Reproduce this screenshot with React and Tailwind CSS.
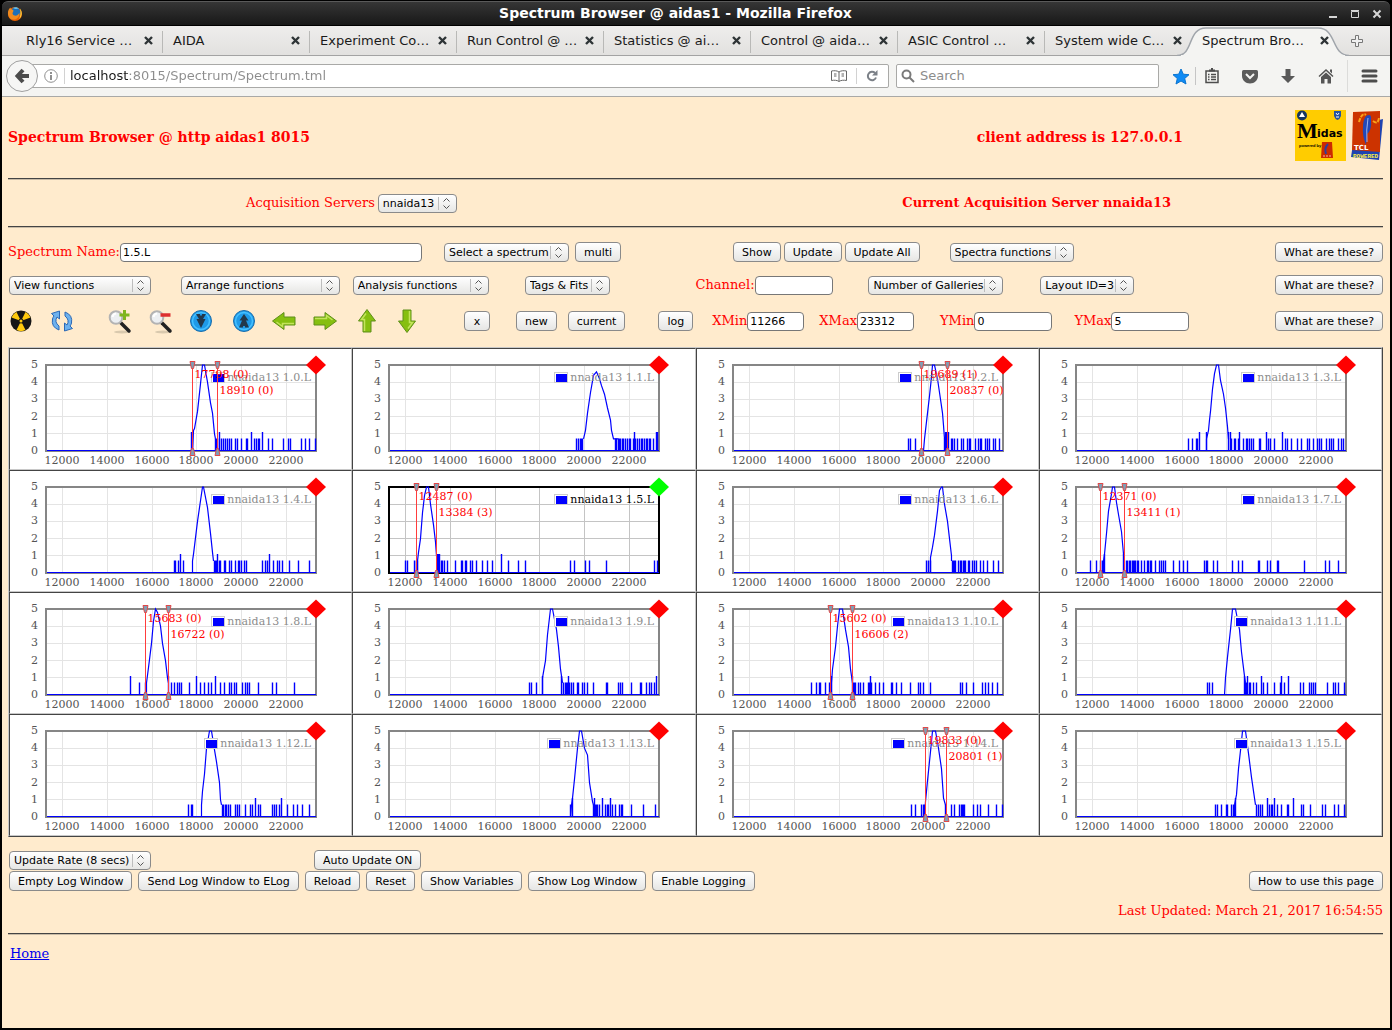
import { useState } from 'react';

const X_MIN = 11266;
const X_MAX = 23312;
const PLOT = { x: 36, y: 16, w: 270, h: 86 };
const X_TICKS = [12000, 14000, 16000, 18000, 20000, 22000];
const Y_TICKS = [0, 1, 2, 3, 4, 5];

// peak: [x, counts] in plot pixels, low / high: single channel hits
const SPECTRA = [
    {
        name: '1.0.L', tags: [[17798, 0], [18910, 0]],
        peak: [[146, 0], [147, 1.2], [148, 1.3], [151, 2.3], [154, 3.9], [156, 5], [158, 5], [161, 4], [164, 2.8], [166, 2.2], [168, 1], [169, 0.7]],
        low: [169, 170, 171, 173, 175, 177, 179, 181, 183, 185, 189, 191, 195, 200, 201, 208, 210, 212, 213, 222, 226, 237, 242, 244, 255, 259, 263, 269],
        high: [145, 146, 173, 205, 216],
    },
    {
        name: '1.1.L', tags: [],
        peak: [[194, 0.7], [196, 1.2], [198, 2.2], [201, 3.4], [204, 4.4], [207, 4.6], [210, 4.2], [212, 3.8], [215, 3.3], [218, 2.5], [221, 1.8], [222, 1.2], [224, 0.7], [229, 0.7]],
        low: [187, 189, 191, 192, 193, 226, 227, 229, 230, 231, 233, 234, 236, 238, 240, 241, 244, 246, 248, 250, 252, 253, 255, 257, 258, 260, 261, 264],
        high: [245, 267, 268],
    },
    {
        name: '1.2.L', tags: [[19689, 1], [20837, 0]],
        peak: [[190, 0], [191, 0.7], [192, 1.2], [194, 2.2], [196, 3.2], [198, 4.3], [199, 5], [201, 5], [204, 4.2], [206, 3.4], [209, 2.2], [210, 1.5], [211, 0.7]],
        low: [175, 177, 182, 211, 218, 219, 221, 224, 228, 230, 234, 236, 237, 242, 245, 247, 248, 252, 254, 256, 260, 262, 266],
        high: [212, 213, 215],
    },
    {
        name: '1.3.L', tags: [],
        peak: [[130, 0], [130, 0.7], [132, 1.2], [133, 1.8], [134, 2.3], [136, 3.6], [138, 4.5], [140, 5], [142, 5], [144, 4.1], [147, 3.3], [149, 2.5], [151, 1.4], [152, 0.7]],
        low: [112, 116, 120, 121, 155, 158, 159, 162, 167, 170, 171, 173, 175, 177, 183, 184, 192, 194, 198, 209, 211, 215, 221, 225, 231, 233, 237, 241, 243, 245, 250, 253, 255, 257, 262, 265, 267],
        high: [123, 130, 152, 154, 163, 190, 206],
    },
    {
        name: '1.4.L', tags: [],
        peak: [[146, 0], [146, 0.7], [147, 1.1], [151, 3], [156, 5], [157, 5], [161, 3.8], [164, 2.3], [166, 1.2], [167, 0.7]],
        low: [128, 129, 132, 137, 168, 169, 170, 171, 173, 174, 178, 179, 183, 185, 189, 192, 193, 195, 198, 200, 216, 219, 221, 227, 231, 233, 236, 243, 252, 263],
        high: [134, 171, 223],
    },
    {
        name: '1.5.L', tags: [[12487, 0], [13384, 3]], selected: true,
        peak: [[28, 0], [28, 0.7], [29, 1.2], [31, 2], [33, 3.5], [35, 4.5], [37, 5], [39, 5], [41, 4], [44, 2.8], [46, 1.8], [47, 1], [48, 0.7]],
        low: [16, 18, 25, 27, 28, 52, 53, 55, 58, 66, 72, 73, 76, 77, 81, 83, 87, 93, 98, 103, 119, 129, 136, 181, 185, 196, 200, 217, 265, 268],
        high: [48, 49, 50, 112],
    },
    {
        name: '1.6.L', tags: [],
        peak: [[197, 0], [197, 0.9], [199, 1.5], [201, 2.2], [204, 3.6], [206, 4.8], [208, 5], [209, 5], [211, 4], [214, 3], [216, 2], [218, 1], [218, 0.7]],
        low: [193, 195, 197, 219, 220, 221, 222, 225, 227, 228, 230, 231, 232, 235, 236, 239, 241, 243, 247, 250, 254, 260, 265],
        high: [],
    },
    {
        name: '1.7.L', tags: [[12371, 0], [13411, 1]],
        peak: [[27, 0], [27, 0.7], [28, 1.1], [30, 2.3], [32, 3.6], [35, 4.6], [36, 5], [38, 5], [40, 4.1], [42, 3.4], [45, 2.4], [47, 1.1], [48, 0.7]],
        low: [14, 20, 24, 26, 27, 50, 51, 53, 54, 56, 57, 58, 59, 61, 62, 65, 68, 71, 72, 74, 75, 79, 83, 85, 87, 89, 97, 103, 107, 111, 128, 130, 131, 137, 141, 156, 162, 166, 182, 183, 191, 194, 201, 202, 228, 249, 253, 262],
        high: [28, 47],
    },
    {
        name: '1.8.L', tags: [[15683, 0], [16722, 0]],
        peak: [[100, 0], [100, 0.7], [102, 1.6], [105, 3], [107, 4.3], [109, 5], [111, 4.8], [114, 4], [116, 3], [119, 2], [121, 1], [122, 0.7]],
        low: [93, 99, 125, 128, 131, 133, 135, 143, 154, 158, 162, 165, 174, 178, 183, 185, 188, 190, 196, 199, 201, 203, 212, 226, 230, 248],
        high: [84, 122, 150, 169],
    },
    {
        name: '1.9.L', tags: [],
        peak: [[153, 0], [153, 1], [156, 2], [158, 3.5], [161, 5], [163, 5], [167, 3.8], [169, 2.8], [171, 1.5], [173, 0.7]],
        low: [140, 142, 147, 174, 176, 177, 178, 180, 182, 184, 188, 189, 193, 195, 198, 204, 217, 218, 229, 231, 233, 242, 251, 252, 257, 260, 262, 265],
        high: [153, 172, 179, 267],
    },
    {
        name: '1.10.L', tags: [[15602, 0], [16606, 2]],
        peak: [[98, 0], [98, 0.7], [99, 1.5], [102, 2.8], [104, 4], [106, 5], [109, 5], [112, 3.8], [115, 2.8], [117, 1.5], [119, 0.7]],
        low: [78, 83, 86, 87, 92, 96, 97, 120, 121, 122, 125, 127, 130, 135, 136, 138, 142, 146, 150, 158, 159, 163, 168, 177, 185, 187, 190, 197, 227, 229, 233, 240, 249, 252, 255, 259, 264],
        high: [98, 119, 137],
    },
    {
        name: '1.11.L', tags: [],
        peak: [[148, 0], [149, 1], [151, 2.2], [154, 3.8], [156, 5], [159, 5], [163, 3.8], [165, 2.5], [168, 1.1], [169, 0.7]],
        low: [131, 133, 136, 169, 170, 173, 174, 177, 180, 187, 191, 198, 204, 208, 224, 227, 233, 235, 237, 239, 251, 257, 259, 262, 268],
        high: [168, 171, 185, 205, 212],
    },
    {
        name: '1.12.L', tags: [],
        peak: [[155, 0], [155, 0.7], [156, 1.5], [158, 2.5], [160, 4], [163, 5], [165, 5], [168, 3.9], [170, 3.2], [173, 2], [174, 1], [175, 0.7]],
        low: [142, 145, 146, 176, 177, 179, 180, 182, 184, 189, 191, 193, 199, 204, 206, 212, 214, 226, 228, 230, 233, 241, 247, 251, 256, 263],
        high: [209, 235],
    },
    {
        name: '1.13.L', tags: [],
        peak: [[181, 0], [182, 0.7], [183, 1.1], [185, 2.2], [188, 4], [190, 5], [192, 5], [195, 4], [198, 3.6], [200, 2], [203, 0.9], [204, 0.7]],
        low: [181, 204, 206, 207, 208, 210, 216, 218, 219, 223, 226, 230, 232, 233, 242, 254, 266],
        high: [183, 205, 213, 221],
    },
    {
        name: '1.14.L', tags: [[19833, 0], [20801, 1]],
        peak: [[191, 0], [192, 0.9], [194, 2.1], [197, 3.8], [199, 5], [202, 5], [205, 4], [208, 2.8], [210, 1.1], [212, 0.7]],
        low: [178, 182, 188, 190, 191, 212, 218, 221, 226, 228, 229, 230, 231, 240, 244, 247, 255, 263, 269],
        high: [],
    },
    {
        name: '1.15.L', tags: [],
        peak: [[158, 0.7], [160, 1.3], [162, 2.8], [165, 4.4], [166, 5], [169, 5], [172, 3.7], [175, 2.3], [178, 1.1], [179, 0.7]],
        low: [139, 141, 145, 150, 151, 155, 157, 158, 180, 182, 184, 186, 193, 195, 196, 201, 205, 211, 212, 225, 227, 234, 246, 249, 258, 262, 268],
        high: [159, 191, 198, 217],
    },
];

const toX = (channel) => PLOT.x + Math.floor(((channel - X_MIN) / (X_MAX - X_MIN)) * PLOT.w);
const toY = (counts) => PLOT.y + PLOT.h - (counts * PLOT.h) / 5;

const SpectrumPlot = ({ spectrum }) => {
    const { name, peak, low, high, tags, selected } = spectrum;
    const bottom = PLOT.y + PLOT.h;
    const right = PLOT.x + PLOT.w;
    const legendX = PLOT.x + (name.length > 5 ? 158 : 165);
    const hits = (list, counts) => list.map((x) => `M${PLOT.x + x + 0.5} ${bottom}V${toY(counts)}`).join('');
    const line = peak.map(([x, c]) => `${PLOT.x + x + 0.5},${toY(c)}`).join(' ');

    return (
        <svg width="330" height="120" className="block font-['DejaVu_Serif',serif] text-[11px]" role="img" aria-label={`nnaida13 ${name}`}>
            <g stroke={selected ? '#c4c4c4' : '#e4e4e4'} shapeRendering="crispEdges">
                {X_TICKS.map((t) => <line key={t} x1={toX(t) + 0.5} x2={toX(t) + 0.5} y1={PLOT.y} y2={bottom} />)}
                {Y_TICKS.map((t) => <line key={t} x1={PLOT.x} x2={right} y1={toY(t)} y2={toY(t)} />)}
            </g>
            <rect x={PLOT.x} y={PLOT.y} width={PLOT.w} height={PLOT.h} fill="none" stroke={selected ? '#000' : '#868686'} strokeWidth="2" />
            <path d={hits(low, 0.72) + hits(high, 1.1)} stroke="#0000ff" strokeWidth="1.4" />
            <polyline points={line} fill="none" stroke="#0000ff" strokeWidth="1.2" />
            <line x1={PLOT.x + 1} x2={right} y1={bottom - 0.5} y2={bottom - 0.5} stroke="#0000ff" />

            <g fill="#545454">
                {X_TICKS.map((t) => <text key={t} x={toX(t)} y="115" textAnchor="middle">{t}</text>)}
                {Y_TICKS.map((t) => <text key={t} x="28" y={Math.round(toY(t)) + 3} textAnchor="end">{t}</text>)}
            </g>

            <rect x={legendX + 0.5} y="23.5" width="13" height="10" fill="#fff" stroke="#ccc" />
            <rect x={legendX + 2} y="25" width="11" height="8" fill="#0000ff" />
            <text x={PLOT.x + 265} y="32" textAnchor="end" fill={selected ? '#000' : '#8c8c8c'}>nnaida13 {name}</text>

            {tags.map(([channel, count], i) => {
                const x = toX(channel) + 0.5;
                return (
                    <g key={channel}>
                        <line x1={x} x2={x} y1={PLOT.y} y2={bottom} stroke="#ff3c3c" />
                        <path d={`M${x - 2.5} 12.5h5l-1.5 7h-2zM${x - 2.5} 106.5h5l-1.5-7h-2z`} fill="#7f9fb5" stroke="#e04848" />
                        <text x={x + 2} y={29 + i * 16} fill="#ff0000">{channel} ({count})</text>
                    </g>
                );
            })}
            <path d={`M${right} 6.5l10 9.5-10 9.5-10-9.5z`} fill={selected ? '#00ff00' : '#ff0000'} />
        </svg>
    );
};

const Button = ({ children, className = '' }) => (
    <button
        type="button"
        className={`h-5 shrink-0 whitespace-nowrap rounded-[4px] border border-[#8a8a8a] bg-linear-to-b from-white to-[#e6e6e4] px-2 font-['DejaVu_Sans',sans-serif] text-[11px] leading-none text-black ${className}`}
    >
        {children}
    </button>
);

const Select = ({ label, className = '', id }) => (
    <span className={`relative inline-block h-[19px] shrink-0 ${className}`}>
        <select
            id={id}
            aria-label={id ? undefined : label}
            className="block h-full w-full appearance-none rounded-[4px] border border-[#8a8a8a] bg-linear-to-b from-white to-[#e6e6e4] pl-[4px] font-['DejaVu_Sans',sans-serif] text-[11px] leading-none text-black"
        >
            <option>{label}</option>
        </select>
        <svg className="pointer-events-none absolute right-[3px] top-[3px]" width="16" height="13" fill="none">
            <path d="M0.5 0v13" stroke="#bdbdbd" />
            <path d="M5.500 4.500l3-3 3 3M5.500 8.500l3 3 3-3" stroke="#555" />
        </svg>
    </span>
);

const TextField = ({ label, value = '', className = '' }) => {
    const [text, setText] = useState(value);
    return (
        <label className="flex shrink-0 items-center whitespace-nowrap">
            {label}
            <input
                type="text"
                value={text}
                onChange={(e) => setText(e.target.value)}
                className={`h-[19px] rounded-[4px] border border-[#777] bg-white px-[2px] font-['DejaVu_Sans',sans-serif] text-[11px] text-black ${className}`}
            />
        </label>
    );
};

const Rule = () => <hr className="h-[2px] border-0 border-t border-b border-t-[#444] border-b-[#c9bba6]" />;

const TABS = ['Rly16 Service …', 'AIDA', 'Experiment Co…', 'Run Control @ …', 'Statistics @ ai…', 'Control @ aida…', 'ASIC Control …', 'System wide C…', 'Spectrum Bro…'];

const CloseMark = () => (
    <svg width="9" height="9" viewBox="0 0 9 9" stroke="#2e3436" strokeWidth="2.4" fill="none">
        <path d="M1 1l7 7M8 1L1 8" />
    </svg>
);

const TitleBar = () => (
    <header className="flex h-[25px] items-center rounded-t-md border-t border-b border-t-[#5a5a5a] border-b-black bg-linear-to-b from-[#363636] to-[#181818] pl-[5px] pr-2">
        <svg width="16" height="16" viewBox="0 0 16 16">
            <circle cx="8" cy="8" r="7" fill="#e66000" />
            <circle cx="8.5" cy="6.5" r="5" fill="#1c6fb8" />
            <path d="M6 2c2-1.4 5-.6 6 1-2-.6-3 .4-4 0z" fill="#5fc0ee" />
            <path d="M1 6C1.500 3 3 2 3.500 1.500c0 1 .5 1.500 1.500 2C6.500 4 7 4.500 6 6c-1 1-.5 3 1.500 3.500 2 .5 3.500-.5 5-2.500.5 3-2 6-5 6.500C3 14 .5 10 1 6z" fill="#f08a1d" />
            <path d="M13 2.500c2.500 3 2.500 8-1 10.500 1.500-2.500 2-6 1-10.500z" fill="#ffd23c" />
        </svg>
        <h1 className="flex-1 text-center text-[14px] font-bold text-white">Spectrum Browser @ aidas1 - Mozilla Firefox</h1>
        <div className="flex items-center gap-3">
            <button type="button" aria-label="Minimize"><svg width="10" height="10"><path d="M1 8h8" stroke="#d5d5d5" strokeWidth="2" /></svg></button>
            <button type="button" aria-label="Maximize"><svg width="10" height="10"><path d="M1.500 2.500h7v6h-7zM1 1.500h8" stroke="#d5d5d5" fill="none" /></svg></button>
            <button type="button" aria-label="Close"><svg width="10" height="10"><path d="M1.500 1.500l7 7M8.500 1.500l-7 7" stroke="#d5d5d5" strokeWidth="2" /></svg></button>
        </div>
    </header>
);

const TabStrip = () => (
    <nav className="flex h-[30px] border-b border-[#a3a3a3] bg-linear-to-b from-[#eeedec] to-[#e2e1df] pl-[14px]">
        {TABS.map((tab, i) => {
            const active = i === TABS.length - 1;
            return (
                <div key={tab} className="relative flex w-[147px] items-center justify-between pr-[10px] pl-[10px] text-[13px] text-[#1a1a1a]">
                    {active && (
                        <svg className="absolute -left-[15px] top-[1px]" width="177" height="29" fill="#f4f4f2">
                            <path d="M0 28.500C17 28.500 10 1 29 1h112c19 0 13 27.500 31 27.500" stroke="#a0a5ab" strokeWidth="1.500" />
                            <path d="M4 28h164v1H4z" />
                        </svg>
                    )}
                    <a href="#" className="relative whitespace-nowrap">{tab}</a>
                    <button type="button" aria-label={`Close ${tab}`} className="relative"><CloseMark /></button>
                    {i < TABS.length - 2 && <span className="absolute right-0 top-[5px] h-[22px] w-px bg-[#b9b9b7]" />}
                </div>
            );
        })}
        <button type="button" aria-label="New tab" className="ml-[11px]">
            <svg width="14" height="14" fill="#f0f0f0" stroke="#777"><path d="M5.500 1.500h3v4h4v3h-4v4h-3v-4h-4v-3h4z" /></svg>
        </button>
    </nav>
);

const NavBar = () => (
    <div className="flex h-[41px] items-center border-b border-[#a9a9a7] bg-[#f4f4f2] pl-1 pr-3 text-[13px]">
        <button type="button" aria-label="Back" className="z-10 flex size-8 shrink-0 items-center justify-center rounded-full border border-[#a0a0a0] bg-[#f6f6f5]">
            <svg width="16" height="16" fill="none" stroke="#4c4c4c" strokeWidth="4"><path d="M9 2L3.500 8 9 14M4 8h11" /></svg>
        </button>
        <div className="-ml-2 flex h-6 flex-1 items-center rounded-r-[2px] border border-[#a9a9a7] bg-white pl-[13px]">
            <svg width="14" height="14" fill="none" stroke="#8f8f8f" className="mr-[6px] shrink-0"><circle cx="7" cy="7" r="6.300" /><path d="M7 6v5M7 3v2" strokeWidth="2" /></svg>
            <input
                aria-label="Address"
                defaultValue="localhost:8015/Spectrum/Spectrum.tml"
                className="h-4 min-w-0 flex-1 border-l border-[#d2d2d2] bg-[linear-gradient(to_right,#1a1a1a_64px,#8c8c8c_64px)] bg-clip-text pl-[5px] text-transparent outline-none"
            />
            <svg width="16" height="14" fill="none" stroke="#666" className="shrink-0"><path d="M8 3C6 1.500 3 1.500.500 2v9.500C3 11 6 11 8 12.500 10 11 13 11 15.500 11.500V2C13 1.500 10 1.500 8 3zM8 3v9M3 5h2.500M3 7h2.500M10.500 5H13M10.500 7H13" /></svg>
            <span className="mx-[9px] h-4 w-px bg-[#d2d2d2]" />
            <svg width="12" height="12" fill="none" stroke="#7b8087" strokeWidth="2" className="mr-[10px] shrink-0"><path d="M10 7.500A4.200 4.200 0 1 1 9 3" /><path d="M11.500 0v5.500H6z" fill="#7b8087" stroke="none" /></svg>
        </div>
        <div className="ml-[7px] flex h-6 w-[263px] items-center rounded-[2px] border border-[#a9a9a7] bg-white pl-1">
            <svg width="14" height="14" fill="none" stroke="#7a7a7a" strokeWidth="2"><circle cx="5.500" cy="5.500" r="4" /><path d="M8.500 8.500l4.500 4.500" /></svg>
            <input aria-label="Search" placeholder="Search" className="ml-[5px] min-w-0 flex-1 outline-none placeholder:text-[#8c8c8c]" />
        </div>
        <button type="button" aria-label="Bookmark" className="ml-[13px]"><svg width="18" height="17" fill="#0f8bf5" stroke="#0a74d0"><path d="M9 1l2.300 5.200 5.700.5-4.300 3.800 1.300 5.500-5-3-5 3 1.300-5.500L1 6.700l5.700-.5z" /></svg></button>
        <span className="ml-[5px] h-[18px] w-px bg-[#c5c5c5]" />
        <button type="button" aria-label="Bookmarks list" className="ml-2"><svg width="16" height="16" fill="none" stroke="#4d4d4d" strokeWidth="1.500"><path d="M2 3h12v11.500H2zM4 6.500h1.500M7 6.500h5M4 9h1.500M7 9h5M4 11.500h1.500M7 11.500h5" /><path d="M5 2.500h6M7 1h2" strokeWidth="2" /></svg></button>
        <button type="button" aria-label="Pocket" className="ml-[22px]"><svg width="16" height="15" fill="#5b5b5b"><path d="M1.500 1h13q1.500 0 1.500 1.500V7c0 4-3.500 7.500-8 7.500S0 11 0 7V2.500Q0 1 1.500 1z" /><path d="M4 5l4 4 4-4" stroke="#f4f4f2" strokeWidth="2" fill="none" /></svg></button>
        <button type="button" aria-label="Downloads" className="ml-[22px]"><svg width="16" height="16" fill="#585858"><path d="M5.500 1h5v7H15l-7 7-7-7h4.500z" /></svg></button>
        <button type="button" aria-label="Home" className="ml-[22px]"><svg width="16" height="16" fill="#555"><path d="M.500 8L8 1l7.500 7-1 1L8 3 1.500 9z" /><path d="M3 9l5-4.500L13 9v6.500H9.500V11h-3v4.500H3zM12 1.500h2v4l-2-2z" /></svg></button>
        <span className="ml-[13px] h-8 w-px bg-[#dcdcda]" />
        <button type="button" aria-label="Menu" className="ml-[13px]"><svg width="17" height="14" stroke="#4d4d4d" strokeWidth="3" strokeLinecap="round"><path d="M2 2h13M2 7h13M2 12h13" /></svg></button>
    </div>
);

const Logos = () => (
    <div className="mb-1 flex gap-[5px]">
        <svg width="51" height="51" aria-label="Midas">
            <rect width="51" height="51" fill="#ffcc00" />
            <circle cx="7" cy="5.500" r="5" fill="#17365f" />
            <path d="M7 2l3 5H4z" fill="#fff" />
            <path d="M39 1h7v5q-1 3-3.500 4Q40 9 39 6z" fill="#2454a0" />
            <path d="M41 3l1.500 2L44 3M41 7h3" stroke="#fff" fill="none" />
            <text x="2" y="28" fontSize="22" fontWeight="bold" fontFamily="Liberation Serif">M</text>
            <text x="22" y="27" fontSize="11" fontWeight="bold" fontFamily="DejaVu Sans">idas</text>
            <text x="4" y="37" fontSize="4" fontWeight="bold" fontFamily="Liberation Sans">powered by</text>
            <path d="M27 32h10l1 16H26z" fill="#cc2a00" />
            <path d="M33 34q-4 4-2 10" stroke="#2f3f9c" strokeWidth="2" fill="none" />
            <path d="M28 46h8" stroke="#f7b4a0" strokeDasharray="2 1" />
        </svg>
        <svg width="32" height="51" aria-label="Tcl powered">
            <path d="M28 10l4-1-4 41-28-3 2-13z" fill="#1f43b0" />
            <path d="M2 2l27-1v41l-28-2z" fill="#cc3300" />
            <path d="M8 12Q11 2 15 5M22 11q5 4 6-3" stroke="#f9a21a" strokeWidth="2" fill="none" strokeDasharray="4 1" />
            <path d="M15 6q6-3 5 4 1 10-4 14l-1 11q-4-10-3-18 0-7 3-11z" fill="#2348b8" />
            <path d="M17 8q-2 12-1 24" stroke="#9db6ee" fill="none" />
            <text x="3" y="40" fontSize="7" fill="#fff" fontFamily="DejaVu Sans">TCL</text>
            <text x="2" y="48" fontSize="6" fontWeight="bold" fill="#ffee44" fontFamily="Liberation Mono">POWERED</text>
        </svg>
    </div>
);

const ToolButton = ({ label, className = '', children }) => (
    <button type="button" aria-label={label} className={`shrink-0 ${className}`}>
        <svg width="26" height="26" viewBox="0 0 26 26">{children}</svg>
    </button>
);

const Magnifier = ({ children }) => (
    <>
        <ellipse cx="15" cy="24" rx="8" ry="1.500" fill="#d9c9ae" />
        <path d="M14 15l8 8" stroke="#222" strokeWidth="3.500" strokeLinecap="round" />
        <circle cx="9" cy="9.500" r="6.300" fill="#eceff2" stroke="#b3b3b3" strokeWidth="2" />
        <path d="M5.500 9q.5-3 3.500-3.500" stroke="#fff" strokeWidth="2" fill="none" />
        {children}
    </>
);

const BlueDisc = ({ d }) => (
    <>
        <circle cx="13" cy="13" r="10.500" fill="#1f9ae8" stroke="#1a6dab" />
        <circle cx="13" cy="13" r="8.500" fill="none" stroke="#45c0ff" strokeWidth="1.500" />
        <path d={d} fill="#23384a" />
    </>
);

const GreenArrow = ({ turn }) => (
    <g transform={`rotate(${turn} 13 13)`}>
        <path d="M2 9h11V4.500L24.500 13 13 21.500V17H2z" fill="#86bf10" stroke="#5f8f1a" strokeLinejoin="round" />
        <path d="M3 10.500h11.500V7.500l6 4.500" stroke="#c3e35c" strokeWidth="1.500" fill="none" />
    </g>
);

const IconBar = () => (
    <>
        <ToolButton label="Radiation">
            <circle cx="13" cy="13" r="10.500" fill="#161616" />
            <path d="M13 13L3.500 9.500A10 10 0 0 1 8.500 4zM13 13l4.500-9a10 10 0 0 1 5 5.500zM13 13l4.500 9a10 10 0 0 1-9 0z" fill="#ffc90e" />
            <circle cx="13" cy="13" r="2.500" fill="#161616" />
            <circle cx="13" cy="13" r="1.500" fill="#ffc90e" />
        </ToolButton>
        <ToolButton label="Refresh" className="ml-[15px]">
            <path d="M10 22Q2 19 3.500 11q.5-2 1.500-3L2.500 5.500 10.500 3v8L8 9q-3 5 2 9zM16 4q8 3 6.500 11-.5 2-1.500 3l2.500 2.500-8 2.500v-8l2.500 2q3-5-2-9z" fill="#6db1ee" stroke="#2c69b5" />
        </ToolButton>
        <ToolButton label="Zoom in" className="ml-8">
            <Magnifier><path d="M17.500 2v10M12.500 7h10" stroke="#7fb51d" strokeWidth="3" /></Magnifier>
        </ToolButton>
        <ToolButton label="Zoom out" className="ml-[15px]">
            <Magnifier><path d="M12.500 7h10" stroke="#dd2f2f" strokeWidth="3.500" /></Magnifier>
        </ToolButton>
        <ToolButton label="Compress" className="ml-[14px]"><BlueDisc d="M8 6h4v1.500h2V6h4l-3 5h2.500L13 20 8.500 11H11z" /></ToolButton>
        <ToolButton label="Expand" className="ml-[17px]"><BlueDisc d="M13 6l4.500 6.500H15l3 7h-4V18h-2v1.500H8l3-7H8.500z" /></ToolButton>
        <ToolButton label="Left" className="ml-[14px]"><GreenArrow turn={180} /></ToolButton>
        <ToolButton label="Right" className="ml-[15px]"><GreenArrow turn={0} /></ToolButton>
        <ToolButton label="Up" className="ml-[16px]"><GreenArrow turn={270} /></ToolButton>
        <ToolButton label="Down" className="ml-[14px]"><GreenArrow turn={90} /></ToolButton>
    </>
);

const App = () => {
    const rows = [0, 4, 8, 12].map((start) => SPECTRA.slice(start, start + 4));

    return (
        <div className="min-h-screen bg-black px-[2px] pb-[2px] pt-px font-['DejaVu_Sans',sans-serif]">
            <TitleBar />
            <TabStrip />
            <NavBar />
            <main className="min-h-[931px] bg-[#ffebcd] pl-[6px] pr-[7px] font-['DejaVu_Serif',serif] text-[13px] text-[#ff0000]">
                <div className="flex h-[81px] items-center text-[14px] font-bold">
                    <h2>Spectrum Browser @ http aidas1 8015</h2>
                    <p className="ml-auto mr-[112px]">client address is 127.0.0.1</p>
                    <Logos />
                </div>
                <Rule />
                <div className="flex h-[46px] items-center">
                    <div className="flex w-1/2 items-center gap-[3px] pl-[238px]">
                        <label htmlFor="server">Acquisition Servers</label>
                        <Select id="server" label="nnaida13" className="w-[79px]" />
                    </div>
                    <p className="ml-auto mr-[212px] font-bold">Current Acquisition Server nnaida13</p>
                </div>
                <Rule />

                <div className="mt-[14px] flex h-5 items-center">
                    <TextField label="Spectrum Name:" value="1.5.L" className="w-[302px]" />
                    <Select label="Select a spectrum" className="ml-[22px] w-[125px]" />
                    <Button className="ml-[6px] w-[46px]">multi</Button>
                    <Button className="ml-[112px]">Show</Button>
                    <Button className="ml-[3px]">Update</Button>
                    <Button className="ml-[3px]">Update All</Button>
                    <Select label="Spectra functions" className="ml-[30px] w-[124px]" />
                    <Button className="ml-auto">What are these?</Button>
                </div>

                <div className="mt-[13px] grid h-5 grid-cols-8 items-center">
                    <Select label="View functions" className="ml-px w-[142px]" />
                    <Select label="Arrange functions" className="ml-px w-[159px]" />
                    <Select label="Analysis functions" className="ml-px w-[136px]" />
                    <Select label="Tags & Fits" className="ml-px w-[85px]" />
                    <TextField label="Channel:" className="w-[78px]" />
                    <Select label="Number of Galleries" className="ml-px w-[135px]" />
                    <Select label="Layout ID=3" className="ml-px w-[94px]" />
                    <Button className="justify-self-end">What are these?</Button>
                </div>

                <div className="mt-[13px] flex h-[26px] items-center">
                    <IconBar />
                    <Button className="ml-[44px] w-[26px]">x</Button>
                    <Button className="ml-[26px]">new</Button>
                    <Button className="ml-[11px]">current</Button>
                    <Button className="ml-[33px]">log</Button>
                    <div className="ml-[19px] flex gap-[15px]">
                        <TextField label="XMin" value="11266" className="w-[57px]" />
                        <TextField label="XMax" value="23312" className="w-[57px]" />
                    </div>
                    <div className="ml-[26px] flex gap-[22px]">
                        <TextField label="YMin" value="0" className="w-[78px]" />
                        <TextField label="YMax" value="5" className="w-[78px]" />
                    </div>
                    <Button className="ml-auto">What are these?</Button>
                </div>

                <table className="mt-[13px] w-full table-fixed border-separate border-spacing-0 border border-t-[#c8c8c8] border-l-[#c8c8c8] border-r-[#444] border-b-[#444] bg-white">
                    <tbody>
                        {rows.map((row) => (
                            <tr key={row[0].name}>
                                {row.map((spectrum) => (
                                    <td key={spectrum.name} className="border border-t-[#444] border-l-[#444] border-r-[#c8c8c8] border-b-[#c8c8c8] p-0">
                                        <SpectrumPlot spectrum={spectrum} />
                                    </td>
                                ))}
                            </tr>
                        ))}
                    </tbody>
                </table>

                <div className="mt-[13px] flex items-center pl-px">
                    <Select label="Update Rate (8 secs)" className="w-[142px]" />
                    <Button className="ml-[163px]">Auto Update ON</Button>
                </div>
                <div className="mt-px flex items-center gap-[6px] pl-px">
                    <Button>Empty Log Window</Button>
                    <Button>Send Log Window to ELog</Button>
                    <Button>Reload</Button>
                    <Button>Reset</Button>
                    <Button>Show Variables</Button>
                    <Button>Show Log Window</Button>
                    <Button>Enable Logging</Button>
                    <Button className="ml-auto">How to use this page</Button>
                </div>
                <p className="mt-[10px] mb-3 text-right">Last Updated: March 21, 2017 16:54:55</p>
                <Rule />
                <a href="#" className="mt-[9px] ml-[2px] inline-block text-[#0000ee] underline">Home</a>
            </main>
        </div>
    );
};

export default App;
